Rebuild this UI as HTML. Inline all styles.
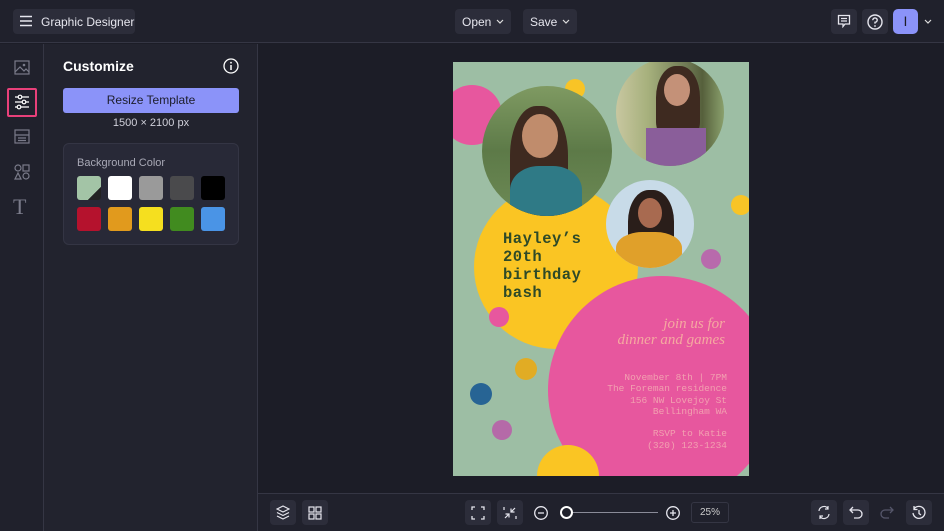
<!DOCTYPE html><html><head><style>
*{box-sizing:border-box;margin:0;padding:0}
body{width:944px;height:531px;overflow:hidden;background:#1c1d27;font-family:"Liberation Sans",sans-serif;color:#e6e6ee;position:relative}
.abs{position:absolute}
.btn{position:absolute;background:#2c2d3a;border-radius:4px}
.c{position:absolute;border-radius:50%;overflow:hidden}
.sw{position:absolute;width:24px;height:24px;border-radius:3px}
svg{position:absolute}
</style></head><body>
<div class="abs" style="left:0;top:0;width:944px;height:43px;background:#20212c;border-bottom:1px solid #353644"></div>
<div class="btn" style="left:13px;top:9px;width:122px;height:25px"></div>
<svg style="left:19px;top:15px" width="14" height="12"><path d="M1 1.5H13M1 6H13M1 10.5H13" stroke="#e6e6ee" stroke-width="1.5"/></svg>
<div class="abs" style="left:41px;top:15px;font-size:12px">Graphic Designer</div>
<div class="btn" style="left:455px;top:9px;width:56px;height:25px"></div>
<div class="abs" style="left:462px;top:15px;font-size:12px">Open</div>
<svg style="left:496px;top:19px" width="8" height="5"><path d="M1 1L4 4L7 1" stroke="#ddd" fill="none" stroke-width="1.2"/></svg>
<div class="btn" style="left:523px;top:9px;width:54px;height:25px"></div>
<div class="abs" style="left:530px;top:15px;font-size:12px">Save</div>
<svg style="left:562px;top:19px" width="8" height="5"><path d="M1 1L4 4L7 1" stroke="#ddd" fill="none" stroke-width="1.2"/></svg>
<div class="btn" style="left:831px;top:9px;width:26px;height:25px"></div>
<svg style="left:837px;top:14px" width="14" height="14"><path d="M1.5 1.5H12.5V10H8L6 12.5V10H1.5Z" stroke="#e6e6ee" fill="none" stroke-width="1.3"/><path d="M4 4.5H10M4 7H10" stroke="#e6e6ee" stroke-width="1.2"/></svg>
<div class="btn" style="left:862px;top:9px;width:26px;height:25px"></div>
<svg style="left:866px;top:13px" width="18" height="18"><circle cx="9" cy="9" r="7" stroke="#e6e6ee" fill="none" stroke-width="1.4"/><path d="M6.8 7.2A2.2 2.2 0 1 1 9 9.3V10.6" stroke="#e6e6ee" fill="none" stroke-width="1.4"/><circle cx="9" cy="13" r="0.9" fill="#e6e6ee"/></svg>
<div class="abs" style="left:893px;top:9px;width:25px;height:25px;background:#8b93f9;border-radius:5px;color:#1c1d27;font-size:14px;text-align:center;line-height:25px">I</div>
<svg style="left:924px;top:19px" width="8" height="5"><path d="M1 1L4 4L7 1" stroke="#ddd" fill="none" stroke-width="1.2"/></svg>
<div class="abs" style="left:0;top:44px;width:44px;height:487px;background:#20212c;border-right:1px solid #353644"></div>
<svg style="left:14px;top:60px" width="16" height="15"><rect x="1" y="1" width="14" height="13" stroke="#7a7b8a" fill="none" stroke-width="1.2"/><path d="M1 12L6 7L10 11L12 9L15 12" stroke="#7a7b8a" fill="none" stroke-width="1.2"/><circle cx="10" cy="5" r="1.3" fill="#7a7b8a"/></svg>
<div class="abs" style="left:7px;top:88px;width:30px;height:29px;border:2px solid #e8407a;border-radius:2px"></div>
<svg style="left:14px;top:94px" width="16" height="16"><path d="M1 3H15M1 8H15M1 13H15" stroke="#fff" stroke-width="1.3"/><circle cx="6" cy="3" r="1.8" fill="#20212c" stroke="#fff" stroke-width="1.2"/><circle cx="10" cy="8" r="1.8" fill="#20212c" stroke="#fff" stroke-width="1.2"/><circle cx="5" cy="13" r="1.8" fill="#20212c" stroke="#fff" stroke-width="1.2"/></svg>
<svg style="left:14px;top:129px" width="16" height="15"><rect x="1" y="1" width="14" height="13" stroke="#7a7b8a" fill="none" stroke-width="1.2"/><path d="M1 6H15M4 9H12M4 11.5H12" stroke="#7a7b8a" stroke-width="1.2"/></svg>
<svg style="left:14px;top:164px" width="16" height="16"><circle cx="4" cy="4" r="3" stroke="#7a7b8a" fill="none" stroke-width="1.2"/><rect x="9" y="1" width="6" height="6" stroke="#7a7b8a" fill="none" stroke-width="1.2"/><path d="M4 9L7 15H1Z" stroke="#7a7b8a" fill="none" stroke-width="1.2"/><circle cx="12" cy="12" r="3" stroke="#7a7b8a" fill="none" stroke-width="1.2"/></svg>
<div class="abs" style="left:13px;top:194px;font-family:'Liberation Serif',serif;font-size:22px;color:#7a7b8a">T</div>
<div class="abs" style="left:44px;top:44px;width:214px;height:487px;background:#22232e;border-right:1px solid #353644"></div>
<div class="abs" style="left:63px;top:58px;font-size:14px;font-weight:bold;color:#fff">Customize</div>
<svg style="left:223px;top:58px" width="16" height="16"><circle cx="8" cy="8" r="7" stroke="#fff" fill="none" stroke-width="1.3"/><path d="M8 7V12" stroke="#fff" stroke-width="1.5"/><circle cx="8" cy="4.7" r="0.9" fill="#fff"/></svg>
<div class="abs" style="left:63px;top:88px;width:176px;height:25px;background:#8b93f9;border-radius:3px;color:#1c1d2a;font-size:12px;text-align:center;line-height:25px">Resize Template</div>
<div class="abs" style="left:63px;top:117px;width:176px;text-align:center;font-size:11px;color:#d0d0da">1500 × 2100 px</div>
<div class="abs" style="left:63px;top:143px;width:176px;height:102px;background:#282937;border:1px solid #343544;border-radius:6px"></div>
<div class="abs" style="left:77px;top:157px;font-size:11px;color:#a8a9b6">Background Color</div>
<div class="sw" style="left:77px;top:176px;background:linear-gradient(135deg,#a3c4a6 0 72%,#222 73%)"></div>
<div class="sw" style="left:108px;top:176px;background:#fff"></div>
<div class="sw" style="left:139px;top:176px;background:#9a9a9a"></div>
<div class="sw" style="left:170px;top:176px;background:#4a4a4c"></div>
<div class="sw" style="left:201px;top:176px;background:#000"></div>
<div class="sw" style="left:77px;top:207px;background:#b5122d"></div>
<div class="sw" style="left:108px;top:207px;background:#e19a1d"></div>
<div class="sw" style="left:139px;top:207px;background:#f5df1f"></div>
<div class="sw" style="left:170px;top:207px;background:#418b1f"></div>
<div class="sw" style="left:201px;top:207px;background:#4a94e6"></div>
<div class="abs" style="left:453px;top:62px;width:296px;height:414px;background:#9dbea4;overflow:hidden">
<div class="c" style="left:-11px;top:23px;width:60px;height:60px;background:#e7579e"></div>
<div class="c" style="left:112px;top:17px;width:20px;height:20px;background:#f8c426"></div>
<div class="c" style="left:21px;top:123px;width:164px;height:164px;background:#fac523"></div>
<div class="c" style="left:29px;top:24px;width:130px;height:130px;background:linear-gradient(180deg,#7f9a62 0%,#5d7a48 50%,#6d8a55 100%)">
 <div class="abs" style="left:28px;top:20px;width:58px;height:110px;background:#3e2a20;border-radius:45% 45% 10% 10%"></div>
 <div class="abs" style="left:40px;top:28px;width:36px;height:44px;background:#c08c6c;border-radius:50%"></div>
 <div class="abs" style="left:28px;top:80px;width:72px;height:60px;background:#2f7a86;border-radius:40% 40% 0 0"></div>
</div>
<div class="c" style="left:163px;top:-4px;width:108px;height:108px;background:linear-gradient(90deg,#c8c7a0 0%,#a6b07c 30%,#6f7a55 65%,#56603c 80%,#8aa06c 100%)">
 <div class="abs" style="left:40px;top:8px;width:44px;height:70px;background:#3e2a20;border-radius:45% 45% 20% 20%"></div>
 <div class="abs" style="left:48px;top:16px;width:26px;height:32px;background:#c49178;border-radius:50%"></div>
 <div class="abs" style="left:30px;top:70px;width:60px;height:40px;background:#8a5e9a"></div>
</div>
<div class="c" style="left:153px;top:118px;width:88px;height:88px;background:#c8dbe8">
 <div class="abs" style="left:22px;top:10px;width:46px;height:70px;background:#2a1e1a;border-radius:45% 45% 20% 20%"></div>
 <div class="abs" style="left:32px;top:18px;width:24px;height:30px;background:#a86a50;border-radius:50%"></div>
 <div class="abs" style="left:10px;top:52px;width:66px;height:40px;background:#e0a02a;border-radius:40% 40% 0 0"></div>
</div>
<div class="c" style="left:278px;top:133px;width:20px;height:20px;background:#f8c426"></div>
<div class="c" style="left:248px;top:187px;width:20px;height:20px;background:#b86aac"></div>
<div class="c" style="left:95px;top:214px;width:228px;height:228px;background:#e7579e"></div>
<div class="c" style="left:36px;top:245px;width:20px;height:20px;background:#e7579e"></div>
<div class="c" style="left:62px;top:296px;width:22px;height:22px;background:#e1ac24"></div>
<div class="c" style="left:17px;top:321px;width:22px;height:22px;background:#276494"></div>
<div class="c" style="left:39px;top:358px;width:20px;height:20px;background:#b56aa8"></div>
<div class="c" style="left:84px;top:383px;width:62px;height:62px;background:#fac523"></div>
<div class="abs" style="left:50px;top:168px;font-family:'Liberation Mono',monospace;font-weight:bold;font-size:15.5px;line-height:18px;color:#2e4a28;letter-spacing:0.5px">Hayley’s<br>20th<br>birthday<br>bash</div>
<div class="abs" style="right:24px;top:254px;text-align:right;font-family:'Liberation Serif',serif;font-style:italic;font-size:15px;line-height:16px;color:#f5a9a0">join us for<br>dinner and games</div>
<div class="abs" style="right:22px;top:310px;text-align:right;font-family:'Liberation Mono',monospace;font-size:9.5px;line-height:11.3px;color:#f2a0b0">November 8th | 7PM<br>The Foreman residence<br>156 NW Lovejoy St<br>Bellingham WA<br><br>RSVP to Katie<br>(320) 123-1234</div>
</div>
<div class="abs" style="left:258px;top:493px;width:686px;height:38px;background:#20212c;border-top:1px solid #353644"></div>
<div class="btn" style="left:270px;top:500px;width:26px;height:25px"></div>
<svg style="left:276px;top:505px" width="14" height="15"><path d="M7 1L13 4L7 7L1 4Z M1 7.5L7 10.5L13 7.5 M1 11L7 14L13 11" stroke="#e6e6ee" fill="none" stroke-width="1.2"/></svg>
<div class="btn" style="left:302px;top:500px;width:26px;height:25px"></div>
<svg style="left:308px;top:506px" width="14" height="14"><rect x="1" y="1" width="5" height="5" stroke="#e6e6ee" fill="none" stroke-width="1.2"/><rect x="8" y="1" width="5" height="5" stroke="#e6e6ee" fill="none" stroke-width="1.2"/><rect x="1" y="8" width="5" height="5" stroke="#e6e6ee" fill="none" stroke-width="1.2"/><rect x="8" y="8" width="5" height="5" stroke="#e6e6ee" fill="none" stroke-width="1.2"/></svg>
<div class="btn" style="left:465px;top:500px;width:26px;height:25px"></div>
<svg style="left:471px;top:506px" width="14" height="14"><path d="M1 4V1H4M10 1H13V4M13 10V13H10M4 13H1V10" stroke="#e6e6ee" fill="none" stroke-width="1.3"/></svg>
<div class="btn" style="left:497px;top:500px;width:26px;height:25px"></div>
<svg style="left:503px;top:506px" width="14" height="14"><path d="M8 6L12 2M8 2.5V6H11.5M6 8L2 12M2.5 8H6V11.5M1 1V4M13 13V10" stroke="#e6e6ee" fill="none" stroke-width="1.2"/></svg>
<svg style="left:533px;top:505px" width="16" height="16"><circle cx="8" cy="8" r="6.3" stroke="#e6e6ee" fill="none" stroke-width="1.3"/><path d="M5 8H11" stroke="#e6e6ee" stroke-width="1.3"/></svg>
<div class="abs" style="left:562px;top:512px;width:96px;height:1px;background:#8a8b98"></div>
<div class="c" style="left:560px;top:506px;width:13px;height:13px;border:2px solid #fff;background:#20212c"></div>
<svg style="left:665px;top:505px" width="16" height="16"><circle cx="8" cy="8" r="6.3" stroke="#e6e6ee" fill="none" stroke-width="1.3"/><path d="M5 8H11M8 5V11" stroke="#e6e6ee" stroke-width="1.3"/></svg>
<div class="abs" style="left:691px;top:502px;width:38px;height:21px;border:1px solid #353644;border-radius:3px;font-size:10px;text-align:center;line-height:20px;color:#ccc">25%</div>
<div class="btn" style="left:811px;top:500px;width:26px;height:25px"></div>
<svg style="left:817px;top:505px" width="14" height="15"><path d="M2 6A5 5 0 0 1 11 3.5M12 9A5 5 0 0 1 3 11.5M11 1V4H8M3 14V11H6" stroke="#e6e6ee" fill="none" stroke-width="1.2"/></svg>
<div class="btn" style="left:843px;top:500px;width:26px;height:25px"></div>
<svg style="left:849px;top:506px" width="14" height="13"><path d="M4 1L1 4L4 7M1 4H9A4 4 0 0 1 9 12H5" stroke="#e6e6ee" fill="none" stroke-width="1.3"/></svg>
<svg style="left:880px;top:506px" width="14" height="13"><path d="M10 1L13 4L10 7M13 4H5A4 4 0 0 0 5 12H9" stroke="#55566a" fill="none" stroke-width="1.3"/></svg>
<div class="btn" style="left:906px;top:500px;width:26px;height:25px"></div>
<svg style="left:911px;top:505px" width="16" height="16"><path d="M3 4A6 6 0 1 1 2 8M3 1V4.5H6.5M8 5V8.5L10 10" stroke="#e6e6ee" fill="none" stroke-width="1.3"/></svg>
</body></html>
